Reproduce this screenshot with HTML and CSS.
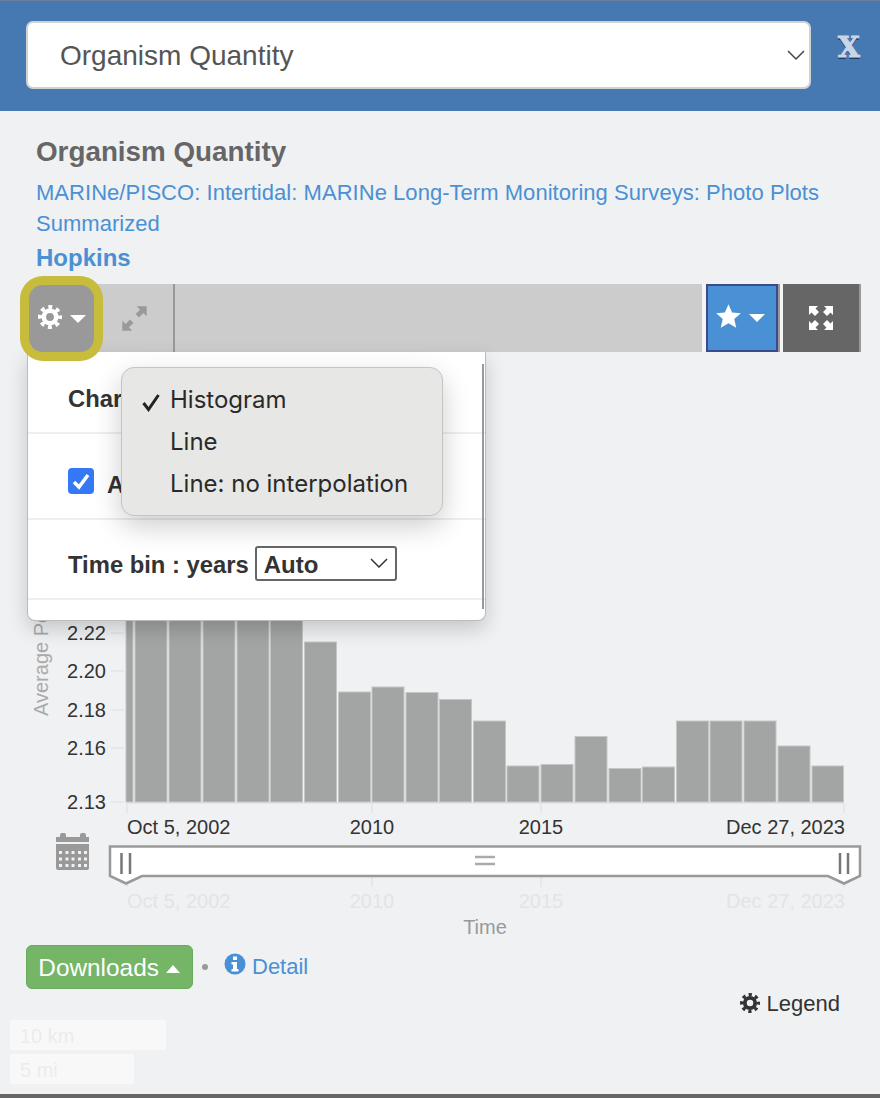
FILE: index.html
```html
<!DOCTYPE html>
<html lang="en">
<head>
<meta charset="utf-8">
<title>Organism Quantity</title>
<link rel="stylesheet" href="styles.css">
</head>
<body>
<svg class="defs" width="0" height="0" aria-hidden="true">
  <symbol id="gear" viewBox="0 0 24 24">
    <circle cx="12" cy="12" r="6.200" fill="none" stroke="currentColor" stroke-width="4.600"/>
    <circle cx="12" cy="12" r="10" fill="none" stroke="currentColor" stroke-width="4" stroke-dasharray="3.900 3.950" stroke-dashoffset="1.950"/>
  </symbol>
</svg>
<div class="page">
  <header class="topbar">
    <div class="picker">
      <span>Organism Quantity</span>
      <svg class="picker-chevron" viewBox="0 0 20 12"><path d="M2 2l8 8 8-8" fill="none" stroke="#444" stroke-width="1.500"/></svg>
    </div>
    <span class="close">X</span>
  </header>

  <section class="intro">
    <h1 class="title">Organism Quantity</h1>
    <a class="dataset">MARINe/PISCO: Intertidal: MARINe Long-Term Monitoring Surveys: Photo Plots Summarized</a>
    <a class="station">Hopkins</a>
  </section>

  <div class="toolbar">
    <button class="tool-gear">
      <svg class="gear-icon"><use href="#gear"/></svg>
      <span class="caret"></span>
    </button>
    <div class="tool-expand">
      <svg viewBox="0 0 28 28" width="31" height="31"><path d="M16 3h9v9l-3-3-4 4-3-3 4-4zM12 25H3v-9l3 3 4-4 3 3-4 4z" fill="#999"/></svg>
    </div>
    <div class="tool-fill"></div>
    <button class="tool-star">
      <svg class="star-icon" viewBox="0 0 24 24" width="27" height="27"><path d="M12 1l3.200 7.400 7.800.7-5.900 5.200 1.800 7.800L12 18l-6.900 4.100 1.800-7.800L1 9.100l7.800-.7z" fill="#fff"/></svg>
      <span class="caret"></span>
    </button>
    <button class="tool-full">
      <svg viewBox="0 0 26 26" width="26" height="26"><path d="M1 1h9L7.500 3.500 11 7 7 11 3.500 7.500 1 10zM25 1v9l-2.500-2.500L19 11l-4-4 3.500-3.500L16 1zM1 25v-9l2.500 2.500L7 15l4 4-3.500 3.500L10 25zM25 25h-9l2.500-2.500L15 19l4-4 3.500 3.500L25 16z" fill="#fff"/></svg>
    </button>
  </div>

  <div class="chart-wrap">
    <svg class="chart" viewBox="0 352 880 588" width="880" height="588">
      <g class="grid">
        <path d="M111 633h13M111 671h13M111 710h13M111 748h13M111 802h13"/>
        <path d="M126 803H844M127 803v10M372 803v10M541 803v10M844 803v10"/>
        <path d="M372 877v10M541 877v10M844 877v10M127 877v10"/>
      </g>
      <g class="bars">
        <rect x="126" y="500" width="7" height="302"/>
        <rect x="135" y="500" width="32" height="302"/>
        <rect x="169" y="500" width="32" height="302"/>
        <rect x="203" y="500" width="32" height="302"/>
        <rect x="237" y="500" width="32" height="302"/>
        <rect x="270.500" y="500" width="32" height="302"/>
        <rect x="304.500" y="642" width="32" height="160"/>
        <rect x="338.500" y="692" width="32" height="110"/>
        <rect x="372" y="687" width="32" height="115"/>
        <rect x="406" y="692.500" width="32" height="109.500"/>
        <rect x="439.500" y="699.500" width="32" height="102.500"/>
        <rect x="473.500" y="721" width="32" height="81"/>
        <rect x="507" y="766" width="32" height="36"/>
        <rect x="541" y="764.500" width="32" height="37.500"/>
        <rect x="575" y="736.500" width="32" height="65.500"/>
        <rect x="609" y="768.500" width="32" height="33.500"/>
        <rect x="642.500" y="767" width="32" height="35"/>
        <rect x="676.500" y="721" width="32" height="81"/>
        <rect x="710" y="721" width="32" height="81"/>
        <rect x="744" y="721" width="32" height="81"/>
        <rect x="778" y="746" width="32" height="56"/>
        <rect x="812" y="766" width="31.500" height="36"/>
      </g>
      <text class="axis-title" transform="translate(48 716) rotate(-90)">Average Percent Cover</text>
      <g class="tick-y">
        <text x="106" y="640">2.22</text>
        <text x="106" y="678">2.20</text>
        <text x="106" y="717">2.18</text>
        <text x="106" y="755">2.16</text>
        <text x="106" y="809">2.13</text>
      </g>
      <g class="tick-x">
        <text x="127" y="834">Oct 5, 2002</text>
        <text class="mid" x="372" y="834">2010</text>
        <text class="mid" x="541" y="834">2015</text>
        <text class="end" x="845" y="834">Dec 27, 2023</text>
      </g>
      <g class="tick-x ghost">
        <text x="127" y="908">Oct 5, 2002</text>
        <text class="mid" x="372" y="908">2010</text>
        <text class="mid" x="541" y="908">2015</text>
        <text class="end" x="845" y="908">Dec 27, 2023</text>
      </g>
      <text class="axis-label" x="485" y="934">Time</text>

      <g class="calendar">
        <path d="M56 837h4v-2a2 2 0 0 1 2-2h2a2 2 0 0 1 2 2v2h14v-2a2 2 0 0 1 2-2h2a2 2 0 0 1 2 2v2h3v5H56z"/>
        <path fill-rule="evenodd" d="M56 844h33v24a2 2 0 0 1-2 2H58a2 2 0 0 1-2-2zM59 851v3h3v-3zM65.500 851v3h3v-3zM71.500 851v3h3v-3zM78 851v3h3v-3zM84 851v3h3v-3zM59 857.500v3h3v-3zM65.500 857.500v3h3v-3zM71.500 857.500v3h3v-3zM78 857.500v3h3v-3zM84 857.500v3h3v-3zM59 864v3h3v-3zM65.500 864v3h3v-3zM71.500 864v3h3v-3zM78 864v3h3v-3zM84 864v3h3v-3z"/>
      </g>

      <path class="slider" d="M110 846.500H860V876L844 883.500 828 876H142L126 883.500 110 876Z"/>
      <path class="slider-grip" d="M121.500 853v21M130 853v21M840 853v21M848 853v21"/>
      <path class="slider-mid" d="M475 857h20M475 864h20"/>
    </svg>

    <div class="settings">
      <div class="settings-row row-chart"><strong>Chart type</strong></div>
      <div class="settings-row row-auto">
        <span class="check"><svg viewBox="0 0 26 26" width="26" height="26"><path d="M6 14l5 5 9-12" fill="none" stroke="#fff" stroke-width="3.500"/></svg></span>
        <strong class="auto-label">Auto</strong>
      </div>
      <div class="settings-row row-bin">
        <strong>Time bin : years</strong>
        <div class="bin-select">
          <span class="bin-value">Auto</span>
          <svg viewBox="0 0 18 10" width="18" height="10"><path d="M1 1l8 8 8-8" fill="none" stroke="#333" stroke-width="1.500"/></svg>
        </div>
      </div>
      <div class="settings-row row-empty"></div>
    </div>

    <ul class="native-menu">
      <li><svg class="tick" viewBox="0 0 20 20" width="20" height="20"><path d="M2.500 11l5 6.500L17.500 3" fill="none" stroke="#222" stroke-width="3"/></svg>Histogram</li>
      <li>Line</li>
      <li>Line: no interpolation</li>
    </ul>
  </div>

  <div class="actions">
    <button class="downloads">Downloads <span class="caret-up"></span></button>
    <span class="sep"></span>
    <a class="detail">
      <svg viewBox="0 0 22 22" width="22" height="22"><circle cx="11" cy="11" r="10.500" fill="#4a90d4"/><path d="M9 3.500h4v3.500H9zM7.500 9h5.500v7h1.500v2.500h-7V16H9v-4.500H7.500z" fill="#fff"/></svg>
      <span class="detail-text">Detail</span>
    </a>
  </div>
  <div class="legend-row">
    <span class="legend"><svg class="legend-gear"><use href="#gear"/></svg>Legend</span>
  </div>
  <div class="scale">
    <span class="scale-km">10 km</span>
    <span class="scale-mi">5 mi</span>
  </div>
</div>
</body>
</html>
```
FILE: styles.css
```css
* { box-sizing: border-box; }
html, body { margin: 0; padding: 0; }
body {
  background: #f0f1f3;
  font-family: "Liberation Sans", Arial, sans-serif;
  color: #333;
  overflow: hidden;
}
.defs { position: absolute; }
.page { width: 880px; height: 1098px; border-bottom: 4px solid #666; overflow: hidden; }

.topbar {
  height: 111px;
  background: #4679b2;
  border-top: 1px solid #6b7f98;
  padding: 20px 0 0 26px;
  display: flex;
  align-items: flex-start;
}
.picker {
  width: 785px;
  height: 68px;
  background: #fff;
  border: 2px solid #d2d2d0;
  border-radius: 7px;
  display: flex;
  align-items: center;
  justify-content: space-between;
  padding: 2px 3px 0 32px;
  font-size: 28px;
  color: #555;
}
.picker-chevron { width: 20px; height: 12px; margin-top: -2px; }
.close {
  margin: 9px 0 0 27px;
  font-size: 28px;
  line-height: 36px;
  font-weight: bold;
  font-family: "DejaVu Serif", serif;
  color: #c9d6e8;
  -webkit-text-stroke: 1px #c9d6e8;
  text-shadow: 0 2px 0 #233a5c;
}

.intro { padding: 25px 36px 0; height: 173px; }
.title { margin: 0; font-size: 27.800px; line-height: 32px; color: #666; font-weight: bold; }
.dataset { display: block; margin-top: 9px; font-size: 22px; line-height: 31px; letter-spacing: .04px; color: #4a90d4; }
.station { display: block; margin-top: 4px; font-size: 24px; line-height: 30px; font-weight: bold; color: #4a90d4; }

.toolbar {
  margin-left: 28px;
  width: 833px;
  height: 68px;
  display: flex;
  background: #ccc;
}
.toolbar button { border: 0; padding: 0; display: flex; align-items: center; justify-content: center; }
.tool-gear {
  position: relative;
  z-index: 3;
  margin: 1px 0 0 1px;
  width: 65px;
  height: 67px;
  gap: 8px;
  background: #999;
  border-radius: 14px;
  box-shadow: 0 0 0 9px #c8bc3c;
}
.gear-icon { width: 24px; height: 24px; color: #fff; margin-top: -4px; }
.caret { display: inline-block; width: 0; height: 0; border: 8px solid transparent; border-top: 8px solid #fff; border-bottom: 0; }
.tool-expand {
  width: 81px;
  padding-left: 2px;
  border-right: 2px solid #999;
  display: flex;
  align-items: center;
  justify-content: center;
}
.tool-fill { flex: 1; }
.tool-star {
  width: 72px;
  gap: 7px;
  background: #4a90d4;
  border: 2px solid #3c4a8c !important;
  box-shadow: -4px 0 0 #f4f4f5, 2px 0 0 #999, 5px 0 0 #f4f4f5;
  position: relative;
}
.star-icon { margin: -4px 0 0 -4px; }
.tool-full {
  margin-left: 5px;
  width: 78px;
  background: #666;
  border-right: 2px solid #999 !important;
}

.chart-wrap { position: relative; height: 588px; }
.chart { display: block; }
.chart text { font-family: "Liberation Sans", Arial, sans-serif; }
.grid path { fill: none; stroke: #e3e4e6; stroke-width: 1.500; }
.bars rect { fill: #a3a5a4; stroke: #c4c5c5; stroke-width: 1; }
.axis-title { font-size: 20px; fill: #aaa; }
.axis-label { font-size: 20px; fill: #999; text-anchor: middle; }
.tick-y text { font-size: 20px; fill: #333; text-anchor: end; }
.tick-x text { font-size: 20px; fill: #333; }
.tick-x .mid { text-anchor: middle; }
.tick-x .end { text-anchor: end; }
.tick-x.ghost text { fill: #e3e4e6; }
.calendar path { fill: #999; }
.slider { fill: #fff; stroke: #999; stroke-width: 2.500; }
.slider-grip { fill: none; stroke: #777; stroke-width: 2.500; }
.slider-mid { fill: none; stroke: #aaa; stroke-width: 2.500; }

.settings {
  position: absolute;
  left: 27px;
  top: 0;
  width: 459px;
  height: 269px;
  background: #fff;
  border: 1px solid #bbb;
  border-top: 0;
  border-radius: 0 0 8px 8px;
  box-shadow: 0 8px 20px rgba(0, 0, 0, .18);
  font-size: 23.800px;
  color: #333;
}
.settings::after {
  content: "";
  position: absolute;
  right: 1px;
  top: 12px;
  bottom: 11px;
  width: 2px;
  background: #999;
}
.settings-row {
  display: flex;
  align-items: center;
  padding-left: 40px;
  border-bottom: 2px solid #eee;
}
.row-chart { height: 82px; padding-top: 13px; }
.row-auto { height: 86px; padding-top: 10px; }
.row-bin { height: 80px; gap: 6px; padding-top: 12px; }
.row-empty { border-bottom: 0; height: 20px; }
.check {
  width: 26px;
  height: 26px;
  background: #3478f6;
  border-radius: 4px;
  margin: 0 0 1px;
}
.auto-label { margin: 8px 0 0 13px; }
.bin-select {
  width: 142px;
  height: 35px;
  margin-top: -4px;
  border: 2px solid #666;
  border-radius: 3px;
  display: flex;
  align-items: center;
  justify-content: space-between;
  padding: 0 7px;
  font-weight: bold;
  font-size: 24px;
}
.bin-value { padding-top: 4px; }

.native-menu {
  position: absolute;
  left: 121px;
  top: 15px;
  width: 322px;
  height: 149px;
  margin: 0;
  padding: 11px 0;
  list-style: none;
  background: #e7e7e5;
  border: 1px solid #c4c4c4;
  border-radius: 13px;
  box-shadow: 0 10px 28px rgba(0, 0, 0, .2);
  font-family: Inter, "Liberation Sans", sans-serif;
  font-size: 24px;
  color: #2a2a2a;
}
.native-menu li { position: relative; height: 42px; line-height: 42px; padding-left: 48px; }
.tick { position: absolute; left: 19px; top: 13px; }

.actions {
  display: flex;
  align-items: flex-start;
  margin: 5px 0 0 26px;
  height: 44px;
}
.downloads {
  width: 167px;
  height: 44px;
  padding: 2px 1px 0 0;
  background: #74b566;
  border: 1px solid #69ab5b;
  border-radius: 6px;
  color: #fff;
  font-family: "Liberation Sans", Arial, sans-serif;
  font-size: 24.400px;
  white-space: nowrap;
}
.caret-up { display: inline-block; width: 0; height: 0; border: 7.500px solid transparent; border-bottom: 8px solid #fff; border-top: 0; vertical-align: 3px; }
.sep { width: 6px; height: 6px; border-radius: 50%; background: #999; margin: 19px 0 0 9px; }
.detail {
  display: flex;
  align-items: flex-start;
  gap: 6px;
  margin: 8px 0 0 16px;
  font-size: 22px;
  line-height: 26px;
  color: #4a90d4;
}
.detail-text { padding-top: 1px; }
.legend-row { display: flex; justify-content: flex-end; padding: 0 40px 0 0; height: 31px; }
.legend { display: flex; align-items: center; gap: 7px; font-size: 22px; line-height: 26px; color: #333; height: 26px; margin-top: 2px; }
.legend-gear { width: 20px; height: 20px; color: #333; margin-top: -2px; }
.scale { display: flex; flex-direction: column; align-items: flex-start; gap: 4px; margin: 0 0 0 10px; }
.scale span { height: 30px; padding-left: 10px; background: #f8f8f9; color: #ececee; font-size: 20px; line-height: 33px; }
.scale-km { width: 156px; }
.scale-mi { width: 124px; }
```
